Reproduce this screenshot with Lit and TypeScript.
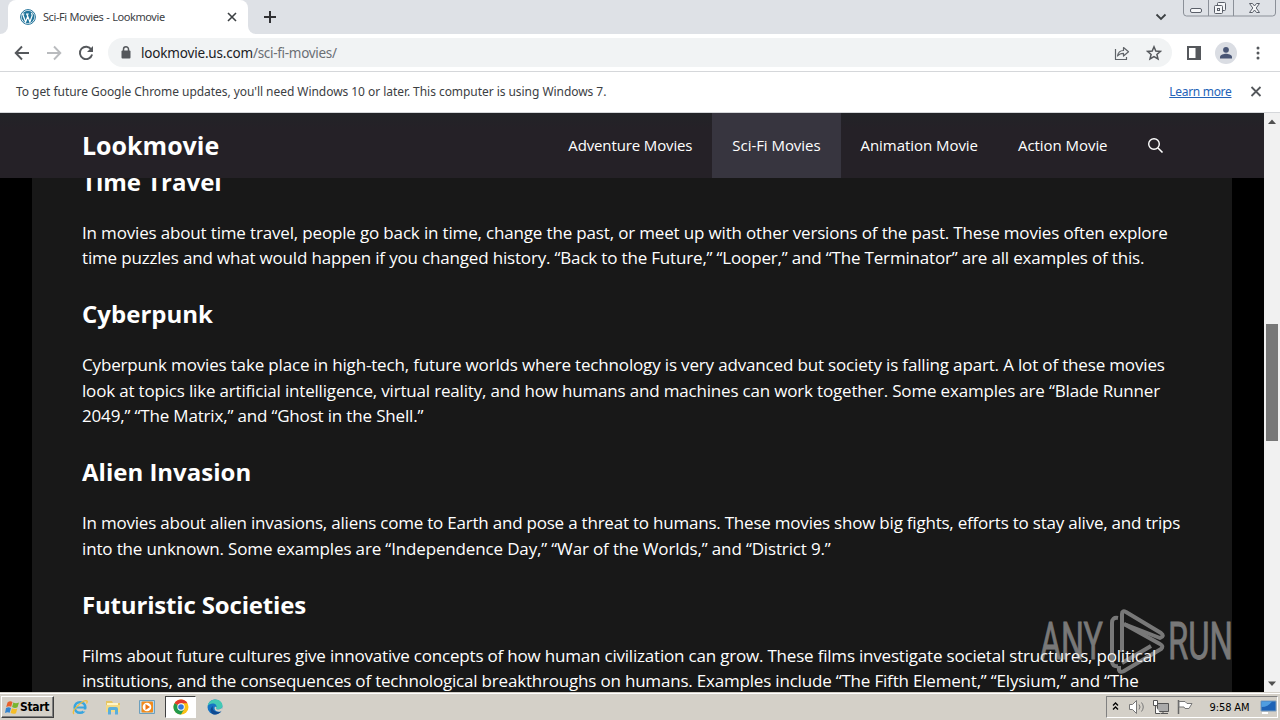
import { LitElement, html, css, svg } from 'lit';
import { customElement, property } from 'lit/decorators.js';
import { classMap } from 'lit/directives/class-map.js';
import { styleMap } from 'lit/directives/style-map.js';

@customElement('browser-chrome')
export class BrowserChrome extends LitElement {
  static styles = css`
    :host {
      display: block;
    }

    svg {
      display: block;
      flex: none;
    }

    .tabs {
      display: flex;
      height: 34px;
      background: #dee1e6;
    }

    .edge {
      width: 8px;
      background: #fff;
    }

    .edge i {
      display: block;
      height: 34px;
      background: #dee1e6;
    }

    .edge.left i {
      border-bottom-right-radius: 8px;
    }

    .edge.right i {
      border-bottom-left-radius: 8px;
    }

    .tab {
      box-sizing: border-box;
      display: flex;
      align-items: center;
      width: 240px;
      padding: 0 10px 0 12px;
      border-radius: 8px 8px 0 0;
      background: #fff;
    }

    .tab-title {
      flex: 1;
      margin: 0 0 1px 7px;
      font: 11px 'Noto Sans', sans-serif;
      letter-spacing: -0.42px;
      word-spacing: 0.4px;
      color: #3c4043;
      white-space: nowrap;
    }

    .plus {
      margin: 10px 0 0 7px;
    }

    .chevron {
      margin: 10px 16px 0 auto;
    }

    .window-buttons {
      margin-right: 4px;
    }

    .toolbar {
      box-sizing: border-box;
      display: flex;
      align-items: center;
      height: 38px;
      padding: 0 13px 0 14px;
      border-bottom: 1px solid #d5d7da;
      background: #fff;
    }

    .nav-icon {
      margin-right: 16px;
    }

    .address {
      box-sizing: border-box;
      display: flex;
      align-items: center;
      width: 1064px;
      height: 29px;
      margin-left: -2px;
      padding: 0 10px 0 10px;
      border-radius: 15px;
      background: #f1f3f4;
    }

    .url {
      flex: 1;
      margin-left: 7px;
      font: 13.5px 'Noto Sans', sans-serif;
      letter-spacing: -0.18px;
      color: #202124;
    }

    .url span {
      letter-spacing: -0.3px;
      color: #6b6f74;
    }

    .share {
      margin-right: 16px;
    }

    .panel {
      margin-left: 14px;
    }

    .avatar {
      margin-left: 13px;
    }

    .dots {
      margin-left: 12px;
    }

    .infobar {
      box-sizing: border-box;
      display: flex;
      align-items: center;
      height: 41px;
      padding: 0 18px 2px 16px;
      border-bottom: 1px solid #d5d7da;
      background: #fff;
      font: 12px 'Noto Sans', sans-serif;
      color: #3c4043;
    }

    .message {
      flex: 1;
      letter-spacing: -0.05px;
    }

    .learn {
      margin-right: 18.5px;
      letter-spacing: -0.3px;
      color: #2463b8;
      text-decoration: underline;
    }
  `;

  render() {
    return html`
      <div class="tabs">
        <div class="edge left"><i></i></div>
        <div class="tab">
          <svg width="16" height="16" viewBox="0 0 16 16">
            <circle cx="8" cy="8" r="7.4" fill="#fff" stroke="#1f7199" stroke-width="1" />
            <circle cx="8" cy="8" r="6.3" fill="#21759b" />
            <path d="M2.6 5l3 8 2.1-5.6L6.8 5M6.9 5l3 8 2.2-6.2c.4-1.4-.7-1.8-.4-2.9M1.8 5h2.6M6 5h2.8" fill="none" stroke="#fff" stroke-width="1.2" />
          </svg>
          <div class="tab-title">Sci-Fi Movies - Lookmovie</div>
          <svg width="12" height="12" viewBox="0 0 12 12">
            <path d="M2 2l8 8M10 2l-8 8" stroke="#3c4043" stroke-width="1.6" />
          </svg>
        </div>
        <div class="edge right"><i></i></div>
        <svg class="plus" width="14" height="14" viewBox="0 0 14 14">
          <path d="M7 1v12M1 7h12" stroke="#303134" stroke-width="2" />
        </svg>
        <svg class="chevron" width="12" height="12" viewBox="0 0 12 12">
          <path d="M1.5 4.5L6 9l4.5-4.5" fill="none" stroke="#3c4043" stroke-width="1.8" />
        </svg>
        <svg class="window-buttons" width="93" height="17" viewBox="0 0 93 17">
          <path d="M.5 0v13q0 3 3 3h86q3 0 3-3V0M25.5 0v16M50.5 0v16" fill="none" stroke="#8b9098" />
          <g fill="#f5f6f8" stroke="#5a5f69">
            <rect x="7.5" y="8.5" width="11" height="4" rx="1.5" />
            <rect x="34.5" y="2.5" width="8" height="8" rx="1" />
            <rect x="31.5" y="5.5" width="8" height="8" rx="1" />
            <rect x="34.5" y="8.5" width="2" height="2" />
            <path d="M66.5 3.5h3l2 2.5 2-2.5h3l-3.3 4.5 3.3 4.5h-3l-2-2.5-2 2.5h-3l3.3-4.5z" />
          </g>
        </svg>
      </div>
      <div class="toolbar">
        <svg class="nav-icon" width="16" height="16" viewBox="0 0 16 16">
          <path d="M15 8H2M8 1.5L1.7 8 8 14.5" fill="none" stroke="#55585c" stroke-width="1.9" />
        </svg>
        <svg class="nav-icon" width="16" height="16" viewBox="0 0 16 16">
          <path d="M1 8h13M8 1.5L14.3 8 8 14.5" fill="none" stroke="#b9bbbe" stroke-width="1.9" />
        </svg>
        <svg class="nav-icon" width="16" height="16" viewBox="0 0 16 16">
          <path d="M13.3 4.5A6.2 6.2 0 1 0 14.1 9.5" fill="none" stroke="#55585c" stroke-width="1.9" />
          <path d="M15 1v6H9z" fill="#55585c" />
        </svg>
        <div class="address">
          <svg width="16" height="16" viewBox="0 0 16 16">
            <rect x="3.5" y="5.5" width="9" height="8" rx="1" fill="#55585c" />
            <path d="M5.5 6V4.2a2.5 2.5 0 0 1 5 0V6" fill="none" stroke="#55585c" stroke-width="1.5" />
          </svg>
          <div class="url">lookmovie.us.com<span>/sci-fi-movies/</span></div>
          <svg class="share" width="16" height="16" viewBox="0 0 16 16">
            <path d="M1.5 4v10.5h11V12M3.5 11c.6-4 2.8-5.5 6-5.5V2.5l5 4.3-5 4.200V8.3c-2.5 0-4.5.7-6 2.7z" fill="none" stroke="#5f6368" stroke-width="1.2" stroke-linejoin="round" />
          </svg>
          <svg width="16" height="16" viewBox="0 0 16 16">
            <path d="M8 1.8l1.8 4.2 4.6.4-3.5 3 1.1 4.5L8 11.5l-4 2.4 1.1-4.5-3.5-3 4.6-.4z" fill="none" stroke="#55585c" stroke-width="1.5" />
          </svg>
        </div>
        <svg class="panel" width="16" height="16" viewBox="0 0 16 16">
          <path d="M2 2h12v12H2z" fill="none" stroke="#55585c" stroke-width="2" />
          <path d="M9.5 2H14v12H9.5z" fill="#55585c" />
        </svg>
        <svg class="avatar" width="22" height="22" viewBox="0 0 22 22">
          <circle cx="11" cy="11" r="11" fill="#dadde3" />
          <circle cx="11" cy="7.8" r="2.9" fill="#485575" />
          <path d="M5 16.5v-1.5c0-2.2 4-3.2 6-3.2s6 1 6 3.2v1.5z" fill="#485575" />
        </svg>
        <svg class="dots" width="18" height="16" viewBox="0 0 18 16">
          <g fill="#55585c">
            <circle cx="9" cy="3" r="1.5" />
            <circle cx="9" cy="8" r="1.5" />
            <circle cx="9" cy="13" r="1.5" />
          </g>
        </svg>
      </div>
      <div class="infobar">
        <div class="message">To get future Google Chrome updates, you'll need Windows 10 or later. This computer is using Windows 7.</div>
        <div class="learn">Learn more</div>
        <svg width="12" height="12" viewBox="0 0 12 12">
          <path d="M1.5 2l9 9M10.5 2l-9 9" stroke="#55585c" stroke-width="1.8" />
        </svg>
      </div>
    `;
  }
}

@customElement('site-header')
export class SiteHeader extends LitElement {
  static styles = css`
    :host {
      display: flex;
      box-sizing: border-box;
      height: 65px;
      padding: 0 100.5px 0 82px;
      align-items: stretch;
      background: linear-gradient(#222327, #252127 16px);
      color: #fff;
      font-family: 'Open Sans', sans-serif;
    }

    .brand {
      flex: 1;
      font-size: 25px;
      font-weight: 700;
      line-height: 65px;
    }

    .item {
      padding: 0 20px;
      font-size: 15px;
      line-height: 65px;
      letter-spacing: -0.05px;
      white-space: nowrap;
    }

    .item:nth-child(2) {
      letter-spacing: -0.13px;
    }

    .current {
      background: #37353f;
    }

    .search {
      align-self: center;
      margin-left: 19px;
    }
  `;

  @property() current = 'Sci-Fi Movies';

  render() {
    const items = ['Adventure Movies', 'Sci-Fi Movies', 'Animation Movie', 'Action Movie'];
    return html`
      <div class="brand">Lookmovie</div>
      ${items.map(item => html`
        <div class=${classMap({ item: true, current: item === this.current })}>${item}</div>
      `)}
      <svg class="search" width="17" height="17" viewBox="0 0 17 17">
        <circle cx="7" cy="7" r="5.3" fill="none" stroke="#fff" stroke-width="1.4" />
        <path d="M11 11l4.5 4.5" stroke="#fff" stroke-width="1.6" />
      </svg>
    `;
  }
}

// each line carries its own tracking in px
const sections = [
  {
    title: 'Time Travel',
    tracking: 0,
    lines: [
      ['In movies about time travel, people go back in time, change the past, or meet up with other versions of the past. These movies often explore', -0.163],
      ['time puzzles and what would happen if you changed history. “Back to the Future,” “Looper,” and “The Terminator” are all examples of this.', -0.175],
    ],
  },
  {
    title: 'Cyberpunk',
    tracking: 0.02,
    lines: [
      ['Cyberpunk movies take place in high-tech, future worlds where technology is very advanced but society is falling apart. A lot of these movies', -0.165],
      ['look at topics like artificial intelligence, virtual reality, and how humans and machines can work together. Some examples are “Blade Runner', -0.18],
      ['2049,” “The Matrix,” and “Ghost in the Shell.”', -0.17],
    ],
  },
  {
    title: 'Alien Invasion',
    tracking: 0,
    lines: [
      ['In movies about alien invasions, aliens come to Earth and pose a threat to humans. These movies show big fights, efforts to stay alive, and trips', -0.217],
      ['into the unknown. Some examples are “Independence Day,” “War of the Worlds,” and “District 9.”', -0.15],
    ],
  },
  {
    title: 'Futuristic Societies',
    tracking: -0.17,
    lines: [
      ['Films about future cultures give innovative concepts of how human civilization can grow. These films investigate societal structures, political', -0.198],
      ['institutions, and the consequences of technological breakthroughs on humans. Examples include “The Fifth Element,” “Elysium,” and “The', -0.194],
    ],
  },
];

@customElement('movie-article')
export class MovieArticle extends LitElement {
  static styles = css`
    :host {
      display: block;
      box-sizing: border-box;
      width: 1200px;
      height: 514px;
      margin-left: 32px;
      padding: 0 50px;
      overflow: hidden;
      background: #181818;
      color: #fff;
      font-family: 'Open Sans', sans-serif;
    }

    .body {
      margin-top: -14.3px;
    }

    h2 {
      margin: 0 0 20px;
      font-size: 24px;
      font-weight: 700;
      line-height: 36px;
    }

    p {
      margin: 0 0 25.5px;
      font-size: 17px;
      line-height: 25.5px;
      white-space: nowrap;
    }
  `;

  render() {
    return html`
      <div class="body">
        ${sections.map(s => html`
          <h2 style=${styleMap({ letterSpacing: `${s.tracking}px` })}>${s.title}</h2>
          <p>${s.lines.map(([line, tracking]) => html`<span style=${styleMap({ letterSpacing: `${tracking}px` })}>${line}</span><br>`)}</p>
        `)}
      </div>
    `;
  }
}

@customElement('task-bar')
export class TaskBar extends LitElement {
  static styles = css`
    :host {
      display: flex;
      box-sizing: border-box;
      height: 28px;
      padding: 3px 2px 1px 1px;
      border-top: 1px solid #d4d0c8;
      box-shadow: inset 0 1px #fff;
      background: #d4d0c8;
      color: #000;
      font: 11px 'DejaVu Sans Condensed', sans-serif;
    }

    svg {
      display: block;
      flex: none;
    }

    .start {
      box-sizing: border-box;
      display: flex;
      align-items: center;
      width: 53px;
      height: 22px;
      padding-left: 3px;
      border: 1px solid;
      border-color: #fff #404040 #404040 #fff;
      box-shadow: inset -1px -1px #808080;
      font-weight: 700;
      font-size: 12px;
    }

    .start span {
      letter-spacing: -0.3px;
    }

    .apps {
      display: flex;
      flex: 1;
      margin-left: 10px;
    }

    .app {
      box-sizing: border-box;
      display: grid;
      place-items: center;
      width: 31px;
      height: 22px;
      margin-right: 2.8px;
    }

    .active {
      border: 1px solid;
      border-color: #404040 #fff #fff #404040;
      background: #fff;
    }

    .tray {
      box-sizing: border-box;
      display: flex;
      align-items: center;
      height: 22px;
      width: 172px;
      padding-left: 4px;
      border: 1px solid;
      border-color: #808080 #fff #fff #808080;
    }

    .clock {
      flex: 1;
      margin-left: 8.5px;
      white-space: nowrap;
      letter-spacing: -0.1px;
    }
  `;

  icons = [
    svg`<circle cx="8" cy="8.5" r="5.3" fill="none" stroke="#38a5df" stroke-width="2.6"/><path d="M4 8.5h9" stroke="#38a5df" stroke-width="2"/><path d="M11 10.5h4v2h-4z" fill="#d4d0c8"/><path d="M2 15c-3-2 4-10 10-13 3-1 4 0 2.5 2.5" fill="none" stroke="#efbd3c" stroke-width="1.3"/>`,
    svg`<path d="M1 2h6l1 2h7v9H1z" fill="#e6c564"/><path d="M2 4h11v3H2z" fill="#fff5c5"/><path d="M1 6h14v7H1z" fill="#f3da86"/><path d="M3 15.5V10q0-2 2-2h6q2 0 2 2v5.5h-3V11H6v4.5z" fill="#5aaedb"/>`,
    svg`<path d="M.5 1.5h15v13H.5z" fill="#b8d9ed" stroke="#6c9fbd"/><rect x="2.5" y="2.500" width="11.500" height="11" rx="1" fill="#f28b1c"/><circle cx="8" cy="8" r="4.3" fill="#fff"/><path d="M6.500 5l4.5 3-4.5 3z" fill="#ee7413"/>`,
    svg`<circle cx="8" cy="8" r="7.5" fill="#fbc116"/><path d="M8 8L1.5 4.25A7.5 7.5 0 0 1 14.5 4.25H8z" fill="#e33b2e"/><path d="M8 8L1.5 4.25A7.5 7.5 0 0 0 8 15.5l3.2-5.6z" fill="#229a4c"/><circle cx="8" cy="8" r="3.7" fill="#fff"/><circle cx="8" cy="8" r="2.8" fill="#3278dc"/>`,
    svg`<circle cx="8" cy="8" r="7.5" fill="#1674c4"/><path d="M.6 7C1.5 2.5 5 .5 8.5.5c4 0 7 3 7 6 0 2.5-2 4-4.5 4-2 0-2.5-.8-1.5-2C10 6 8 4.5 5.8 4.5 3.5 4.5 1.5 5.5.6 7z" fill="#43c9b5"/><path d="M6 7c-1.5 4 2 7 7.5 5.5l1-.5c-2 3-6 4.5-9 3C2.5 13 3 9 6 7z" fill="#104a91"/><path d="M9.6 8.5c-1 1.2-.5 2 1.4 2 2 0 4-.7 4.5-3v4l-2 1C9 13.5 6.5 10.5 8 7.5z" fill="#d4d0c8"/>`,
  ];

  render() {
    return html`
      <div class="start">
        <svg width="15" height="15" viewBox="0 0 15 15">
          <path d="M2.5 2.5Q5 .5 7.5 2L6.2 6.8Q4 5.5 1.2 7z" fill="#e8602c" />
          <path d="M8.3 2.5q2.5 1.5 5.7 0L12.5 7.3q-2.5 1.5-5.4-.2z" fill="#78b52f" />
          <path d="M1 8q2.7-1.4 5 0l-1.3 4.7Q2.5 11.5 0 13z" fill="#3384d0" />
          <path d="M6.9 8.3q2.6 1.5 5.4.2L11 13.2q-2.5 1.3-5.4-.2z" fill="#f5bd27" />
        </svg>
        <span>Start</span>
      </div>
      <div class="apps">
        ${this.icons.map((icon, i) => html`
          <div class=${classMap({ app: true, active: i === 3 })}>
            <svg width="16" height="16" viewBox="0 0 16 16">${icon}</svg>
          </div>
        `)}
      </div>
      <div class="tray">
        <svg width="90" height="18" viewBox="0 0 90 18">
          <path d="M2 7.5L4.5 5 7 7.5M2 11.5L4.5 9 7 11.5" fill="none" stroke="#000" stroke-width="1.3" />
          <path d="M18.5 6.5h3l4-4v13l-4-4h-3z" fill="#fff" stroke="#777" />
          <path d="M28 6.5q2 2.5 0 5M30.5 4.5q3.5 4.5 0 9" fill="none" stroke="#777" />
          <path d="M46.5 5.5h11v8h-11z" fill="#aaa" stroke="#555" />
          <path d="M42.5 2.5h4v5h-4zM44.5 8v7.5h5M50 15.5h7M52 13.5v2" fill="#fff" stroke="#555" />
          <path d="M67.5 2v14" stroke="#666" stroke-width="1.5" />
          <path d="M68 3.5h6l2 2h5l-3 5h-4l-1-1.5h-5z" fill="#fff" stroke="#777" />
        </svg>
        <div class="clock">9:58 AM</div>
        <svg width="17" height="16" viewBox="0 0 17 16">
          <path d="M1 2h15v10H1z" fill="#1d62b6" stroke="#7c9dbd" />
          <path d="M1.5 8Q8 8 12 2.5H1.5z" fill="#4f9de0" />
          <path d="M2 14h6" stroke="#fff" stroke-width="2" />
        </svg>
      </div>
    `;
  }
}

@customElement('app-root')
export class AppRoot extends LitElement {
  static styles = css`
    :host {
      display: block;
      position: relative;
      width: 1280px;
      height: 720px;
      overflow: hidden;
      background: #000;
    }

    .view {
      display: flex;
      height: 579px;
    }

    .page {
      width: 1264px;
      background: #000;
    }

    .scrollbar {
      display: flex;
      flex-direction: column;
      align-items: center;
      width: 16px;
      background: #f1f1f1;
    }

    .thumb {
      width: 12px;
      height: 117px;
      margin: 195px 0 auto;
      background: #787878;
    }

    .watermark {
      position: absolute;
      left: 1036px;
      top: 604px;
      opacity: 0.5;
    }
  `;

  render() {
    return html`
      <browser-chrome></browser-chrome>
      <div class="view">
        <div class="page">
          <site-header></site-header>
          <movie-article></movie-article>
        </div>
        <div class="scrollbar">
          <svg width="16" height="16" viewBox="0 0 16 16"><path d="M4 11L8 6.5l4 4.500z" fill="#505050" /></svg>
          <div class="thumb"></div>
          <svg width="16" height="16" viewBox="0 0 16 16"><path d="M4 5.5L8 10l4-4.5z" fill="#505050" /></svg>
        </div>
      </div>
      <task-bar></task-bar>
      <svg class="watermark" width="210" height="76" viewBox="0 0 210 76">
        <g fill="#d8d8d8" stroke="#d8d8d8" stroke-width="0.8" font-family="Roboto, sans-serif" font-size="52">
          <text x="4" y="55" textLength="63" lengthAdjust="spacingAndGlyphs">ANY</text>
          <text x="132" y="55" textLength="65" lengthAdjust="spacingAndGlyphs">RUN</text>
        </g>
        <g fill="none" stroke="#d8d8d8" stroke-width="4" stroke-linejoin="round">
          <path d="M82 14q-6-1-6 5v38q0 6 6 5" />
          <path d="M86 48V10q0-4 4-2l35 21q4 3-1 5L88 20" />
          <path d="M83 62V66q1 3 5 1l37-22q3-3-1-5L88 20M115 42L86 59" />
        </g>
      </svg>
    `;
  }
}
